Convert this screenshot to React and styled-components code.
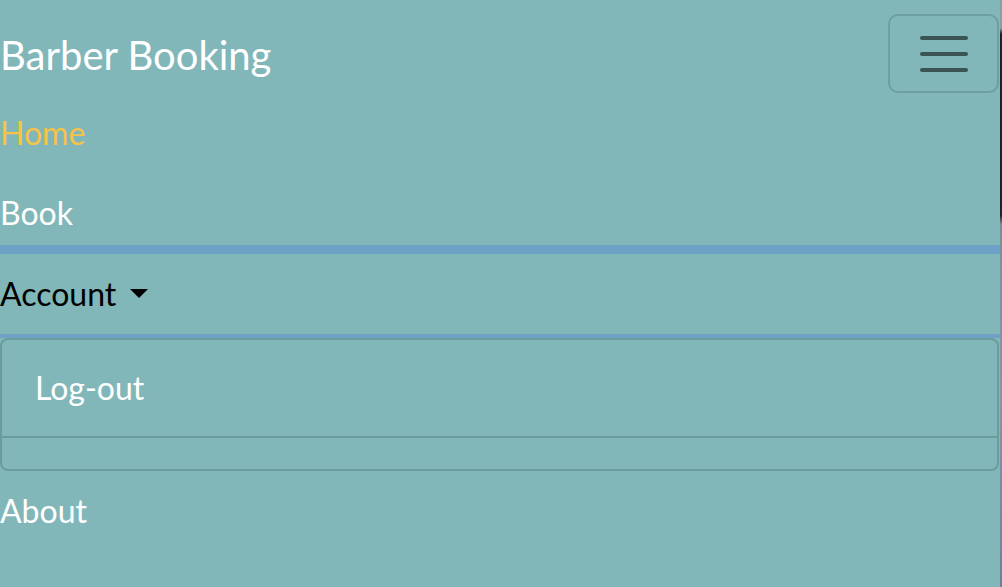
import React from 'react';
import styled, { createGlobalStyle } from 'styled-components';

const GlobalStyle = createGlobalStyle`
  html, body {
    margin: 0;
    padding: 0;
    background: #81b7b9;
  }
  body {
    font-family: Lato, "Open Sans", sans-serif;
  }
  * {
    box-sizing: border-box;
  }
`;

const Page = styled.div`
  display: flex;
  min-height: 587px;
  background: #81b7b9;
`;

const Navbar = styled.nav`
  flex: 1;
  display: flex;
  flex-direction: column;
  padding-top: 14px;
`;

const BrandRow = styled.div`
  display: flex;
  justify-content: space-between;
  align-items: flex-start;
  height: 79px;
`;

const Brand = styled.a`
  font-size: 40px;
  line-height: 79px;
  color: #fff;
  text-decoration: none;
  margin-top: 2px;
`;

const Toggler = styled.button`
  width: 111px;
  height: 79px;
  margin-right: 1px;
  border: 2px solid #6c9fa1;
  border-radius: 10px;
  background: transparent;
  display: flex;
  align-items: center;
  justify-content: center;
  padding: 0;
`;

const NavList = styled.ul`
  list-style: none;
  margin: 0;
  padding: 0;
`;

const NavItem = styled.li``;

const AccountItem = styled.li`
  border-top: 9px solid #6da2c6;
  border-bottom: 4px solid #6da2c6;
`;

const NavLink = styled.a`
  display: flex;
  align-items: center;
  gap: 14px;
  padding: 16px 0 ${(p) => p.$pb || '16px'};
  font-size: 32px;
  line-height: 48px;
  color: ${(p) => p.$color || '#fff'};
  text-decoration: none;
`;

const Caret = styled.span`
  display: inline-block;
  width: 0;
  height: 0;
  border-left: 9px solid transparent;
  border-right: 9px solid transparent;
  border-top: 9px solid #000;
  margin-top: -2px;
`;

const Dropdown = styled.div`
  margin-right: 1px;
  border: 2px solid #6a9b9d;
  border-radius: 8px;
  padding-bottom: 31px;
`;

const DropItem = styled.a`
  display: block;
  padding: 24px 33px;
  font-size: 32px;
  line-height: 48px;
  color: #fff;
  text-decoration: none;
`;

const Divider = styled.hr`
  margin: 0;
  border: none;
  border-top: 2px solid #6a9b9d;
`;

const Edge = styled.div`
  width: 2px;
  background: linear-gradient(
    to bottom,
    #8a9ea4 0px,
    #8a9ea4 28px,
    #1d2227 34px,
    #1d2227 215px,
    #7d8c9c 225px,
    #8a93a6 400px,
    #6e7f95 587px
  );
`;

const HamburgerIcon = () => (
  <svg width="50" height="40" viewBox="0 0 50 40">
    <g stroke="#3c5356" strokeWidth="4" strokeLinecap="round">
      <line x1="3" y1="4" x2="47" y2="4" />
      <line x1="3" y1="20" x2="47" y2="20" />
      <line x1="3" y1="36" x2="47" y2="36" />
    </g>
  </svg>
);

const App = () => {
  return (
    <>
      <GlobalStyle />
      <Page>
        <Navbar>
          <BrandRow>
            <Brand href="#">Barber Booking</Brand>
            <Toggler aria-label="Toggle navigation">
              <HamburgerIcon />
            </Toggler>
          </BrandRow>
          <NavList>
            <NavItem>
              <NavLink href="#" $color="#f6c344">Home</NavLink>
            </NavItem>
            <NavItem>
              <NavLink href="#" $pb="8px">Book</NavLink>
            </NavItem>
            <AccountItem>
              <NavLink href="#" $color="#000">
                Account <Caret />
              </NavLink>
            </AccountItem>
            <li>
              <Dropdown>
                <DropItem href="#">Log-out</DropItem>
                <Divider />
              </Dropdown>
            </li>
            <NavItem>
              <NavLink href="#">About</NavLink>
            </NavItem>
          </NavList>
        </Navbar>
        <Edge />
      </Page>
    </>
  );
};

export default App;
